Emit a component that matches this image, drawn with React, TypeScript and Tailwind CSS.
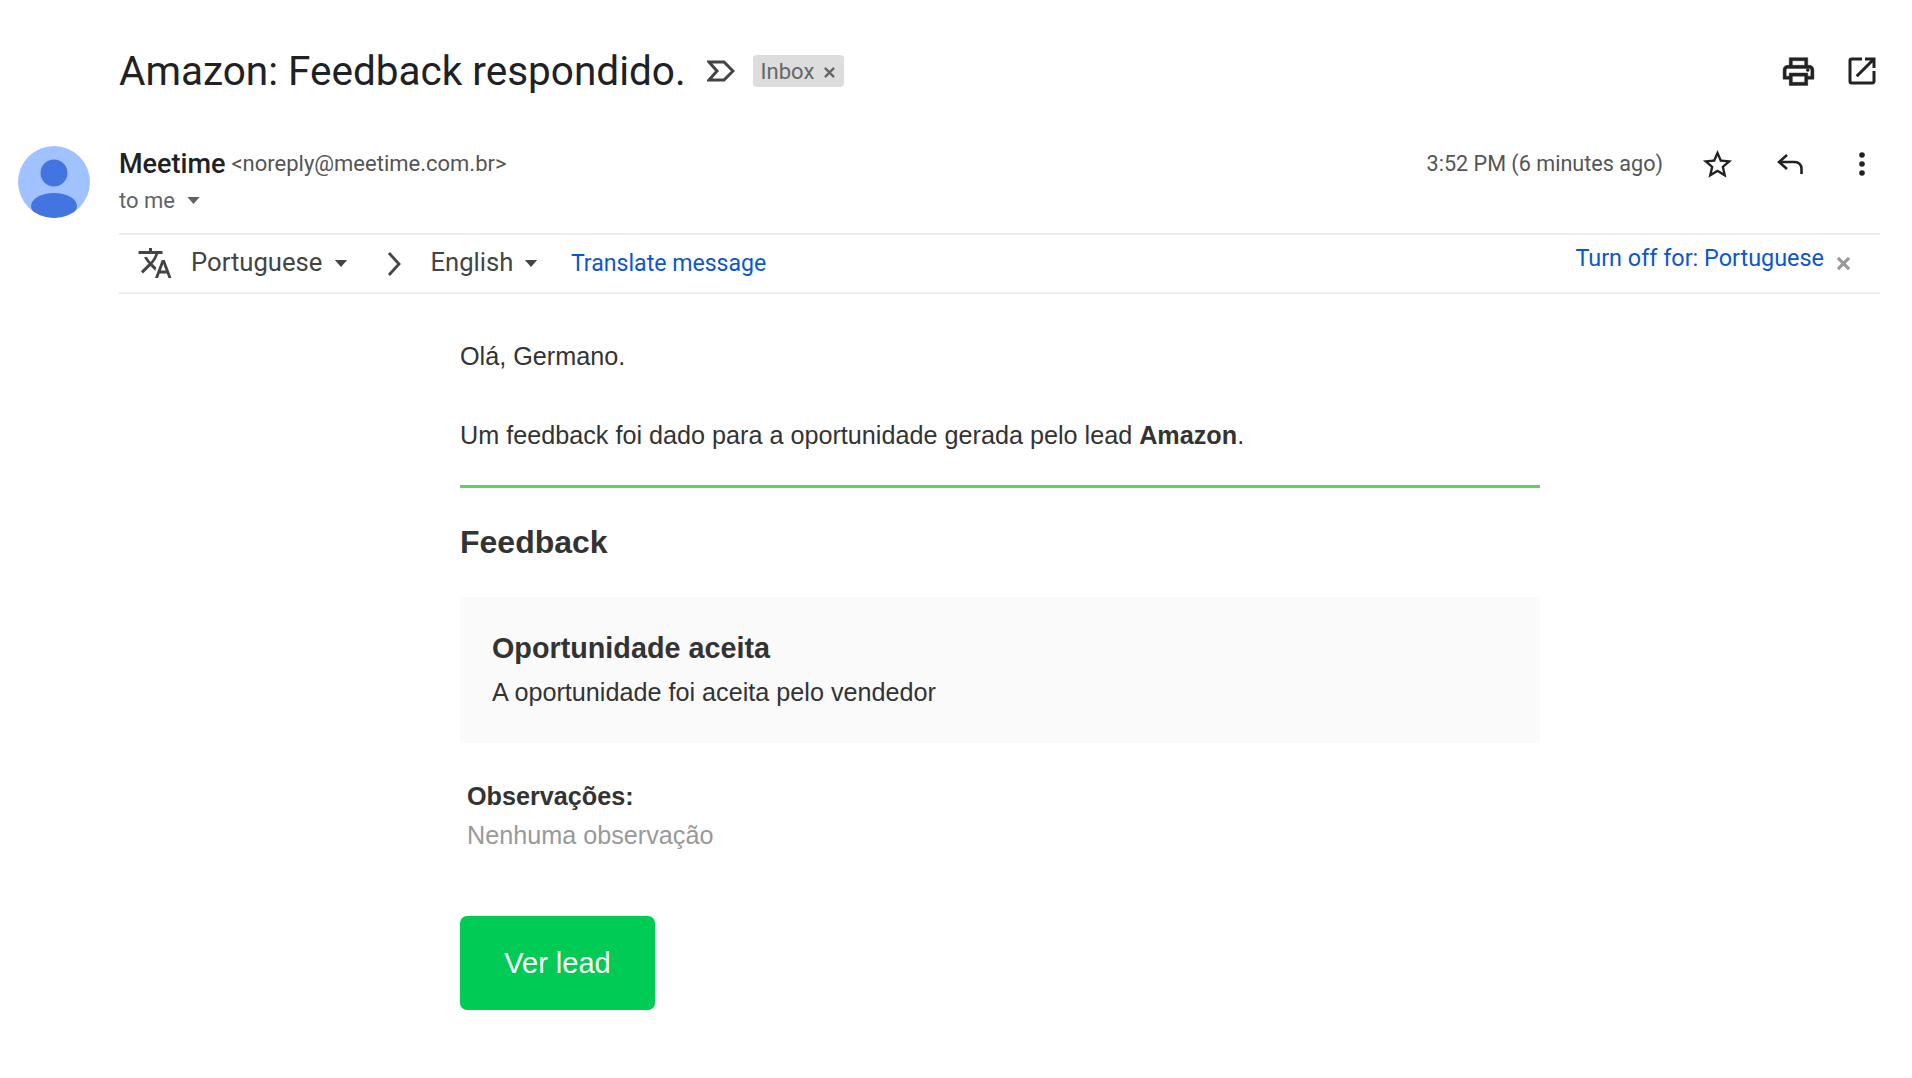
import React from "react";

function Caret({ className }: { className: string }) {
  return (
    <svg viewBox="0 0 14 8" className={className} fill="currentColor">
      <path d="M0 0h14L7 8z" />
    </svg>
  );
}

function TopIcons() {
  return (
    <div className="flex items-center">
      <svg viewBox="0 0 24 24" className="w-[37px] h-[37px] text-[#222]" fill="currentColor" stroke="currentColor" strokeWidth="0.3">
        <path d="M19 8h-1V3H6v5H5c-1.66 0-3 1.34-3 3v6h4v4h12v-4h4v-6c0-1.66-1.34-3-3-3zM8 5h8v3H8V5zm8 14H8v-4h8v4zm4-4h-2v-2H6v2H4v-4c0-.55.45-1 1-1h14c.55 0 1 .45 1 1v4z" />
        <circle cx="18" cy="11" r="1" />
      </svg>
      <svg viewBox="0 0 24 24" className="ml-[27px] w-[36px] h-[36px] text-[#222]" fill="currentColor">
        <path d="M19 19H5V5h7V3H5a2 2 0 00-2 2v14a2 2 0 002 2h14c1.1 0 2-.9 2-2v-7h-2v7zM14 3v2h3.59l-9.83 9.83 1.41 1.41L19 6.41V10h2V3h-7z" />
      </svg>
    </div>
  );
}

export default function App() {
  return (
    <div className="w-[1912px] h-[1078px] bg-white overflow-hidden font-['Roboto',sans-serif]">
      {/* Subject */}
      <div className="h-[142px] pl-[119px] pr-[32px] flex items-center">
        <h1 className="text-[40.500px] leading-[46px] text-[#202124] font-normal whitespace-nowrap">
          Amazon: Feedback respondido.
        </h1>
        <svg viewBox="0 0 28 22" className="ml-[21px] w-[28px] h-[22px] text-[#444]" fill="none" stroke="currentColor" strokeWidth="3">
          <path d="M2 2h15l9 9-9 9H2l8-9z" />
        </svg>
        <div className="ml-[18px] w-[91px] h-[32px] rounded-[4px] bg-[#ddd] flex items-center pl-[8px] text-[22px] text-[#666]">
          Inbox
          <svg viewBox="0 0 12 12" className="ml-[10px] mt-[2px] w-[11px] h-[11px]" fill="none" stroke="currentColor" strokeWidth="2.600">
            <path d="M1 1l10 10M11 1L1 11" />
          </svg>
        </div>
        <div className="ml-auto">
          <TopIcons />
        </div>
      </div>

      <div className="flex">
        {/* Avatar */}
        <div className="w-[119px] pl-[18px] pt-[4px] shrink-0">
          <svg viewBox="0 0 72 72" className="w-[72px] h-[72px]">
            <defs>
              <clipPath id="avatar-clip">
                <circle cx="36" cy="36" r="36" />
              </clipPath>
            </defs>
            <circle cx="36" cy="36" r="36" fill="#a0c3ff" />
            <g clipPath="url(#avatar-clip)" fill="#4375e1">
              <circle cx="36" cy="27" r="13.500" />
              <ellipse cx="36" cy="60" rx="23" ry="13" />
            </g>
          </svg>
        </div>

        <div className="flex-1 pr-[32px]">
          {/* Sender row */}
          <div className="h-[44px] flex items-center">
            <span className="text-[27px] font-medium text-[#202124]">Meetime</span>
            <span className="ml-[6px] pb-[1px] text-[22px] text-[#555]">&lt;noreply@meetime.com.br&gt;</span>
            <span className="ml-auto text-[21.600px] text-[#555]">3:52 PM (6 minutes ago)</span>
            <svg viewBox="0 0 24 24" className="ml-[37px] w-[35px] h-[35px] text-[#222]" fill="currentColor">
              <path d="M22 9.240l-7.190-.620L12 2 9.190 8.630 2 9.240l5.460 4.730L5.820 21 12 17.270 18.180 21l-1.630-7.030L22 9.240zM12 15.400l-3.760 2.270 1-4.280-3.320-2.880 4.380-.380L12 6.100l1.710 4.040 4.380.380-3.320 2.880 1 4.280L12 15.400z" />
            </svg>
            <svg viewBox="0 0 26 20" className="ml-[42px] w-[26px] h-[20px] text-[#222]" fill="none" stroke="currentColor" strokeWidth="2.600">
              <path d="M10 1L2 8l8 7M2 8h16a6.500 6.500 0 0 1 6.500 6.500V20" />
            </svg>
            <svg viewBox="0 0 6 24" className="ml-[56px] mr-[15px] w-[6px] h-[24px] text-[#222]" fill="currentColor">
              <circle cx="3" cy="3" r="2.800" />
              <circle cx="3" cy="12" r="2.800" />
              <circle cx="3" cy="21" r="2.800" />
            </svg>
          </div>

          <div className="h-[28px] flex items-center text-[22px] text-[#5f6368]">
            to me
            <Caret className="ml-[12px] w-[13px] h-[7px]" />
          </div>

          {/* Translate bar */}
          <div className="mt-[19px] h-[61px] border-y-2 border-[#eee] flex items-center pl-[18px] text-[25.650px] text-[#444]">
            <svg viewBox="0 0 24 24" className="mb-[2px] w-[36px] h-[36px]" fill="currentColor">
              <path d="M12.870 15.070l-2.540-2.510.03-.03c1.740-1.940 2.980-4.170 3.710-6.530H17V4h-7V2H8v2H1v1.990h11.170C11.500 7.920 10.440 9.750 9 11.350 8.070 10.320 7.300 9.190 6.690 8h-2c.73 1.630 1.730 3.170 2.980 4.560l-5.090 5.020L4 19l5-5 3.110 3.110.76-2.040zM18.500 10h-2L12 22h2l1.120-3h4.750L21 22h2l-4.500-12zm-2.620 7l1.620-4.330L19.120 17h-3.240z" />
            </svg>
            <span className="ml-[18px] pb-[2px]">Portuguese</span>
            <Caret className="ml-[12px] w-[14px] h-[7px]" />
            <svg viewBox="0 0 14 24" className="ml-[39px] w-[14px] h-[24px]" fill="none" stroke="currentColor" strokeWidth="2.800">
              <path d="M2 1l10 11L2 23" />
            </svg>
            <span className="ml-[29px] pb-[2px]">English</span>
            <Caret className="ml-[10.500px] w-[14px] h-[7px]" />
            <span className="ml-[33px] pt-[2px] text-[23.100px] text-[#0b57d0]">Translate message</span>
            <span className="ml-auto mb-[10px] text-[23.400px] text-[#0b57d0]">Turn off for: Portuguese</span>
            <svg viewBox="0 0 14 14" className="ml-[13px] mr-[30px] w-[13px] h-[13px] text-[#999]" fill="none" stroke="currentColor" strokeWidth="3.400">
              <path d="M1 1l12 12M13 1L1 13" />
            </svg>
          </div>

          {/* Email body */}
          <div className="ml-[341px] w-[1080px] font-['Liberation_Sans',sans-serif] text-[25.200px] leading-[32px] text-[#333]">
            <p className="mt-[46px]">Olá, Germano.</p>
            <p className="mt-[47px]">
              Um feedback foi dado para a oportunidade gerada pelo lead <b>Amazon</b>.
            </p>
            <div className="mt-[34px] h-[3px] bg-[#5dd068]" />
            <h2 className="mt-[34px] text-[32px] leading-[40px] font-bold">Feedback</h2>
            <div className="mt-[35px] h-[146px] bg-[#fafafa] pt-[33px] pl-[32px]">
              <h3 className="text-[28.750px] leading-[36px] font-bold">Oportunidade aceita</h3>
              <p className="mt-[10px]">A oportunidade foi aceita pelo vendedor</p>
            </div>
            <p className="mt-[37px] ml-[7px] font-bold">Observações:</p>
            <p className="mt-[7px] ml-[7px] text-[#999]">Nenhuma observação</p>
            <div className="mt-[65px] w-[195px] h-[94px] rounded-[7px] bg-[#00cb55] flex items-center justify-center text-[29px] text-white">
              Ver lead
            </div>
          </div>
        </div>
      </div>
    </div>
  );
}
